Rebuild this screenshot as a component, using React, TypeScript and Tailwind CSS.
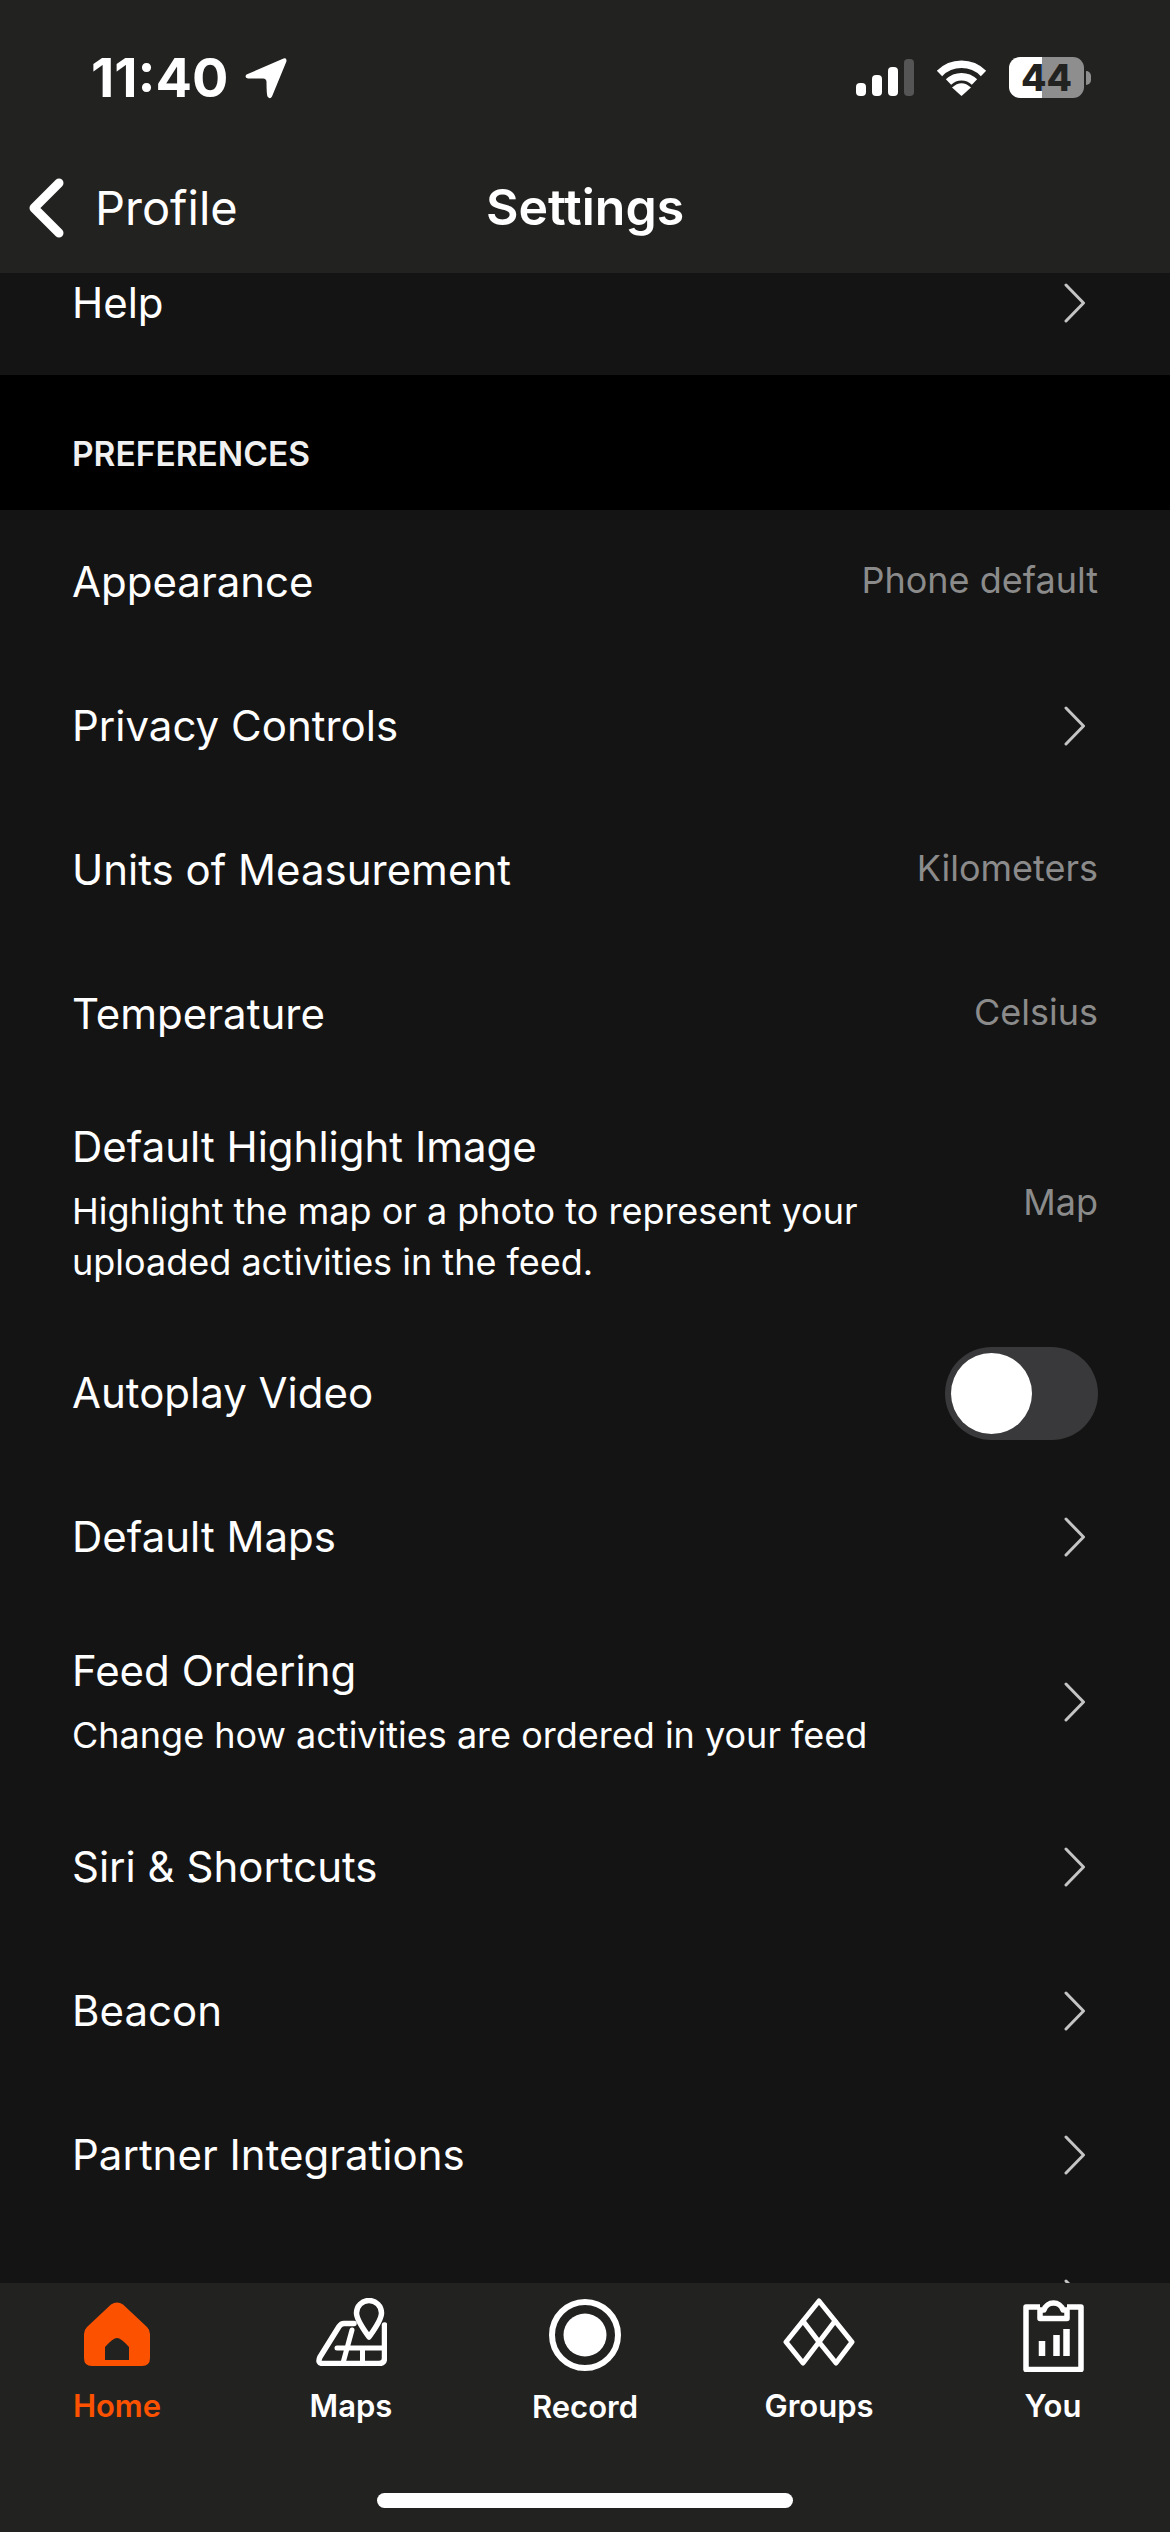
import React from "react";

const Chevron = () => (
  <svg width="22" height="40" viewBox="0 0 22 40" fill="none" className="shrink-0">
    <path d="M2 2 L19.5 20 L2 38" stroke="#c4c4c4" strokeWidth="3" strokeLinecap="round" strokeLinejoin="round" />
  </svg>
);

type RowProps = { title: string; sub?: React.ReactNode; value?: string; chevron?: boolean; h?: string; children?: React.ReactNode };

function Row({ title, sub, value, chevron, h = "h-[144px]", children }: RowProps) {
  return (
    <div className={`${h} flex items-center justify-between pl-[72px] pr-[72px]`}>
      <div className="min-w-0">
        <div className="text-[42px] leading-[56px] text-white">{title}</div>
        {sub ? <div className="mt-[11px] text-[36px] leading-[51px] text-white">{sub}</div> : null}
      </div>
      {value ? <span className="-translate-y-[2px] text-[36px] text-[#8b8b8b]">{value}</span> : null}
      {chevron ? <span className="mr-[12px] flex"><Chevron /></span> : null}
      {children}
    </div>
  );
}

const HomeIcon = () => (
  <svg width="66" height="64" viewBox="0 0 66 64" className="mt-[4px]">
    <path
      fillRule="evenodd"
      fill="#fc5200"
      d="M27 2.5 Q33 -1.5 39 2.5 L63 25 Q66 28 66 32 V56 Q66 64 58 64 H8 Q0 64 0 56 V32 Q0 28 3 25 Z M33 36 Q29 36 21 45 V58 H45 V45 Q37 36 33 36 Z"
    />
  </svg>
);

const MapsIcon = () => (
  <svg width="71" height="68" viewBox="0 0 71 68" fill="none" stroke="#fff" strokeWidth="5.5" strokeLinejoin="round" strokeLinecap="round">
    <path d="M40.5 15 A12.5 12.5 0 0 1 65.5 15 C65.5 22 58 32 53 39 C48 32 40.5 22 40.5 15 Z" />
    <path d="M38 25.5 H28 Q25 25.5 23 28.5 L4 59 Q1 65.5 7 65.5 H63 Q68.5 65.5 68.5 60 V27" />
    <path d="M21 50 H68 M36 32 L27 65 M46.5 50 V65" strokeWidth="5" />
  </svg>
);

const RecordIcon = () => (
  <svg width="72" height="72" viewBox="0 0 72 72" fill="none" className="mt-[1px]">
    <circle cx="36" cy="36" r="33" stroke="#fff" strokeWidth="6" />
    <circle cx="36" cy="36" r="21.5" fill="#fff" />
  </svg>
);

const GroupsIcon = () => (
  <svg width="72" height="68" viewBox="0 0 72 68" fill="none" stroke="#fff" strokeWidth="5" strokeLinejoin="round" strokeLinecap="round">
    <path d="M36 3 L69 44 L53 65 L36 44 L20 65 L3 44 Z" />
    <path d="M20 23 L36 44 L52 23" />
  </svg>
);

const YouIcon = () => (
  <svg width="61" height="74" viewBox="0 0 61 74" fill="none" stroke="#fff" strokeWidth="5.5" strokeLinejoin="round">
    <path d="M17 9 H3 V71.5 H58 V9 H44" />
    <path d="M17 20.5 V12 H21 A10 10 0 0 1 40 12 H44 V20.5 Z" />
    <path d="M19 58 V43 M33.5 58 V37 M43.5 58 V31" strokeWidth="6.5" />
  </svg>
);

function Tab({ icon, label, active, extra = "" }: { icon: React.ReactNode; label: string; active?: boolean; extra?: string }) {
  return (
    <div className="flex flex-col items-center">
      <div className="flex h-[74px] items-start justify-center">{icon}</div>
      <div className={`mt-[14px] text-[31px] font-semibold leading-[40px] ${active ? "text-[#fc5200]" : "text-white"} ${extra}`}>{label}</div>
    </div>
  );
}

export default function App() {
  return (
    <div className="flex h-[2532px] w-[1170px] flex-col overflow-hidden bg-[#141414] font-['Inter',sans-serif]">
      <header className="h-[273px] shrink-0 bg-[#222221]">
        <div className="flex h-[155px] items-start justify-between pt-[55px] pl-[91px] pr-[79px]">
          <div className="flex items-center gap-[16px]">
            <span className="text-[54px] font-bold leading-[46px] text-white">11:40</span>
            <svg width="42" height="41" viewBox="0 0 42 41" fill="#fff">
              <path d="M38.5 0.6 Q42 -0.5 41.4 3.4 L27 38.5 Q25 42 22.5 38.5 Q21.5 36 21.5 24 Q21.5 20.5 18 20.5 L3 20.5 Q-1 19.5 1.5 16.5 Z" />
            </svg>
          </div>
          <div className="flex items-center pt-[2px]">
            <svg width="58" height="37" viewBox="0 0 58 37">
              <rect x="0" y="24" width="10" height="13" rx="4" fill="#fff" />
              <rect x="16" y="16" width="10" height="21" rx="4" fill="#fff" />
              <rect x="32" y="8" width="10" height="29" rx="4" fill="#fff" />
              <rect x="48" y="0" width="10" height="37" rx="4" fill="#555" />
            </svg>
            <svg width="51" height="37" viewBox="0 0 51 37" fill="none" className="ml-[22px]">
              <path d="M3.5 14.5 A31 31 0 0 1 47.5 14.5" stroke="#fff" strokeWidth="7.5" />
              <path d="M12.5 23 A18.5 18.5 0 0 1 38.5 23" stroke="#fff" strokeWidth="7.5" />
              <path d="M25.5 37 L16 28.5 Q25.5 20 35 28.5 Z" fill="#fff" />
            </svg>
            <div className="relative ml-[22px] flex h-[41px] w-[75px]">
              <div className="w-[33px] rounded-l-[11px] bg-white" />
              <div className="flex-1 rounded-r-[11px] bg-[#8e8e8e]" />
              <span className="absolute inset-0 flex items-center justify-center text-[37px] font-extrabold leading-none text-[#222221]">44</span>
            </div>
            <div className="ml-[2px] h-[14px] w-[5px] rounded-r-full bg-[#8e8e8e]" />
          </div>
        </div>
        <div className="relative flex h-[104px] items-center justify-center">
          <div className="absolute left-[28px] top-[23px] flex items-center">
            <svg width="36" height="60" viewBox="0 0 36 60" fill="none">
              <path d="M31 5 L6 30 L31 55" stroke="#fff" strokeWidth="9" strokeLinecap="round" strokeLinejoin="round" />
            </svg>
            <span className="ml-[31px] text-[47px] leading-[60px] text-white">Profile</span>
          </div>
          <h1 className="text-[50px] font-semibold leading-[60px] text-white">Settings</h1>
        </div>
      </header>

      <main className="min-h-0 flex-1 overflow-hidden">
        <div className="-mt-[42px]">
          <Row title="Help" chevron />
          <section className="flex h-[135px] items-center bg-black pl-[72px] pt-[24px]">
            <span className="text-[33.5px] font-semibold text-[#f0f0f0]">PREFERENCES</span>
          </section>
          <Row title="Appearance" value="Phone default" />
          <Row title="Privacy Controls" chevron />
          <Row title="Units of Measurement" value="Kilometers" />
          <Row title="Temperature" value="Celsius" />
          <Row
            title="Default Highlight Image"
            h="h-[235px]"
            sub={<>Highlight the map or a photo to represent your<br />uploaded activities in the feed.</>}
            value="Map"
          />
          <Row title="Autoplay Video">
            <div className="flex h-[93px] w-[153px] items-center rounded-full bg-[#39393b] pl-[6px]">
              <div className="h-[81px] w-[81px] rounded-full bg-white" />
            </div>
          </Row>
          <Row title="Default Maps" chevron />
          <Row title="Feed Ordering" h="h-[186px]" sub="Change how activities are ordered in your feed" chevron />
          <Row title="Siri & Shortcuts" chevron />
          <Row title="Beacon" chevron />
          <Row title="Partner Integrations" chevron />
          <div className="flex h-[144px] items-center justify-end pr-[84px]">
            <Chevron />
          </div>
        </div>
      </main>

      <footer className="h-[249px] shrink-0 bg-[#222221] pt-[15px]">
        <nav className="grid grid-cols-5">
          <Tab icon={<HomeIcon />} label="Home" active />
          <Tab icon={<MapsIcon />} label="Maps" />
          <Tab icon={<RecordIcon />} label="Record" extra="translate-y-[1px]" />
          <Tab icon={<GroupsIcon />} label="Groups" />
          <Tab icon={<YouIcon />} label="You" />
        </nav>
        <div className="mx-auto mt-[67px] h-[15px] w-[416px] rounded-full bg-white" />
      </footer>
    </div>
  );
}
